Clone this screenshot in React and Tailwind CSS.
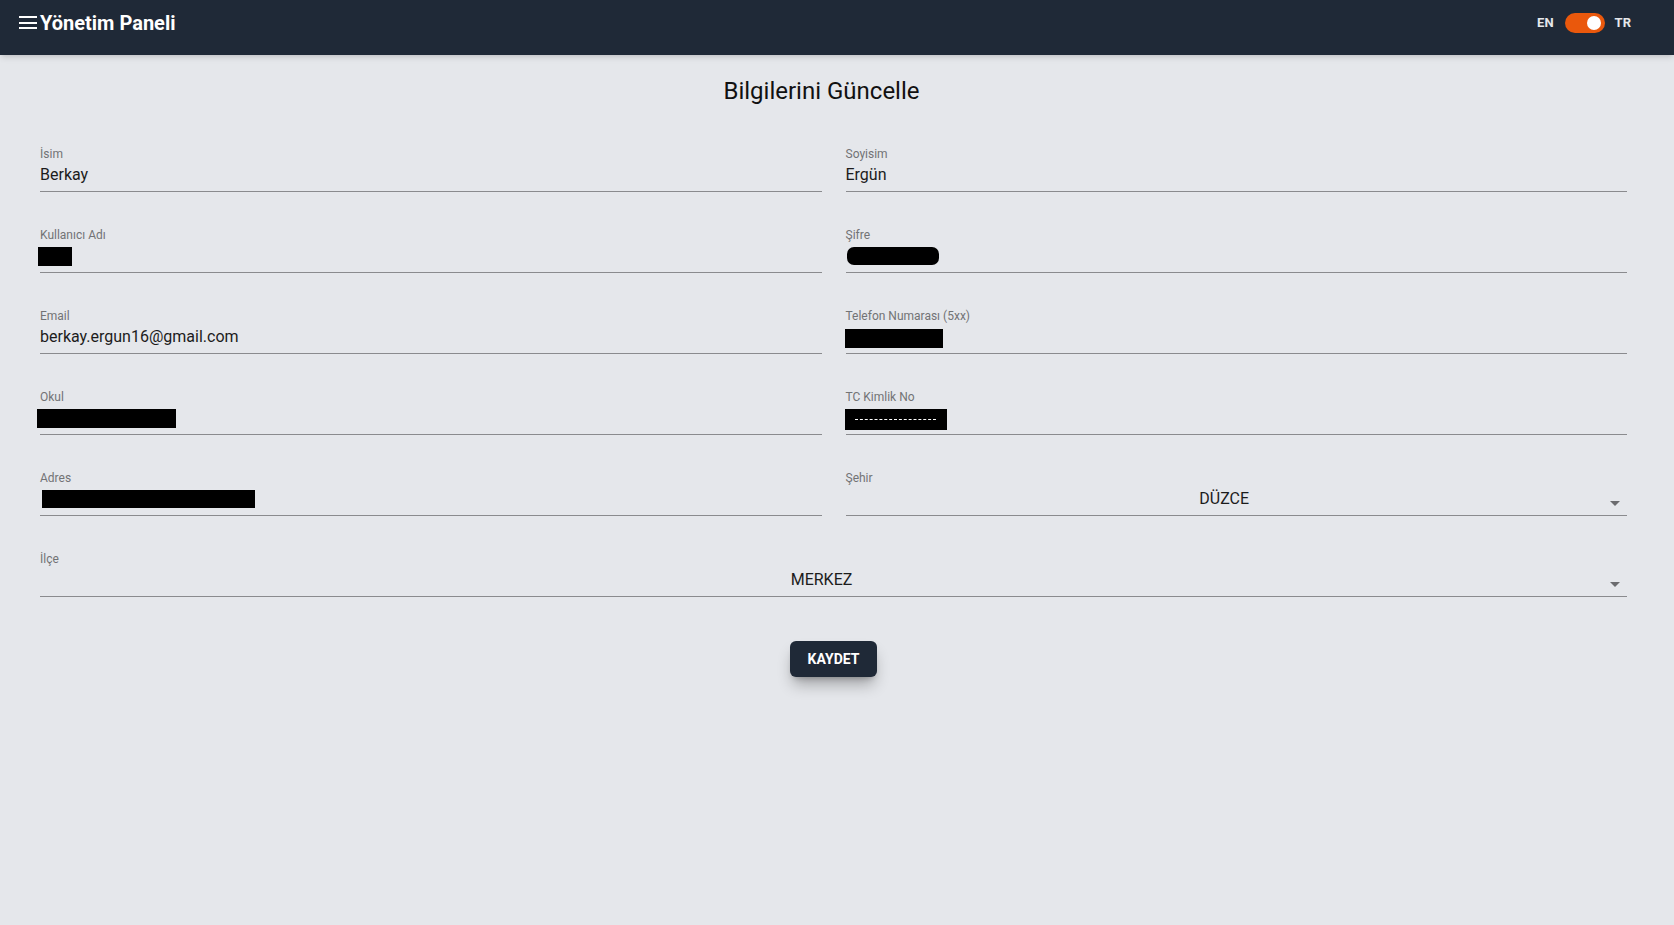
import React from 'react';

const Field = ({ label, children, className = '' }) => (
    <div className={`flex flex-col ${className}`}>
        <span className="h-4 text-xs leading-4 text-[#727375]">{label}</span>
        <div className="mt-px flex h-6 items-center text-base leading-6 text-[#1c1c1c]">
            {children}
        </div>
        <div className="mt-1 border-b border-[#8a8b8e]" />
    </div>
);

const SelectField = ({ label, value, className = '' }) => (
    <Field label={label} className={className}>
        <span className="flex-1 text-center">{value}</span>
        <svg viewBox="0 0 24 24" className="h-6 w-6 translate-y-[4px] fill-[#6b6c6f]">
            <path d="M7 10l5 5 5-5z" />
        </svg>
    </Field>
);

const Redacted = ({ className }) => <span className={`block bg-black ${className}`} />;

export default function App() {
    return (
        <div className="min-h-screen bg-[#e5e7eb] font-['Roboto',sans-serif]">
            {/* Header */}
            <header className="h-[55px] bg-[#1f2937] shadow-md">
                <div className="flex h-[45px] items-center justify-between pl-[19px] pr-[43px]">
                    <div className="flex items-center gap-[3px]">
                        <svg viewBox="0 0 18 14" className="h-[14px] w-[18px]">
                            <rect x="0" y="0" width="18" height="2" fill="#fff" />
                            <rect x="0" y="6" width="18" height="2" fill="#fff" />
                            <rect x="0" y="11" width="18" height="2" fill="#fff" />
                        </svg>
                        <span className="text-xl font-bold text-white">Yönetim Paneli</span>
                    </div>
                    <div className="flex items-center text-[13px] font-bold text-[#e5e7eb]">
                        <span>EN</span>
                        <div className="ml-[11px] flex h-5 w-10 items-center justify-end rounded-full bg-[#ea580c] pr-1">
                            <div className="h-[14px] w-[14px] rounded-full bg-white" />
                        </div>
                        <span className="ml-[10px]">TR</span>
                    </div>
                </div>
            </header>

            <main className="pl-10 pr-[47px]">
                <h1 className="mt-5 pr-6 text-center text-2xl leading-8 text-[#111]">
                    Bilgilerini Güncelle
                </h1>

                <div className="mt-[39px] grid grid-cols-2 gap-x-6 gap-y-[35px]">
                    <Field label="İsim">Berkay</Field>
                    <Field label="Soyisim">Ergün</Field>

                    <Field label="Kullanıcı Adı">
                        <Redacted className="-ml-0.5 h-[19px] w-[34px]" />
                    </Field>
                    <Field label="Şifre">
                        <Redacted className="ml-px -mt-px h-[18px] w-[92px] rounded-[7px]" />
                    </Field>

                    <Field label="Email">berkay.ergun16@gmail.com</Field>
                    <Field label="Telefon Numarası (5xx)">
                        <Redacted className="-ml-px mt-[3px] h-[19px] w-[98px]" />
                    </Field>

                    <Field label="Okul">
                        <Redacted className="-ml-[3px] h-[19px] w-[139px]" />
                    </Field>
                    <Field label="TC Kimlik No">
                        <span className="-ml-px mt-[3px] flex h-[21px] w-[102px] items-center justify-center bg-black">
                            <span className="block w-[81px] border-t border-dashed border-white" />
                        </span>
                    </Field>

                    <Field label="Adres">
                        <Redacted className="ml-0.5 h-[18px] w-[213px]" />
                    </Field>
                    <SelectField label="Şehir" value="DÜZCE" />

                    <SelectField label="İlçe" value="MERKEZ" className="col-span-2" />
                </div>

                <div className="mt-[44px] flex justify-center">
                    <button className="h-9 w-[87px] rounded-md bg-[#1f2937] text-sm font-bold text-white shadow-lg shadow-black/30">
                        KAYDET
                    </button>
                </div>
            </main>
        </div>
    );
}
